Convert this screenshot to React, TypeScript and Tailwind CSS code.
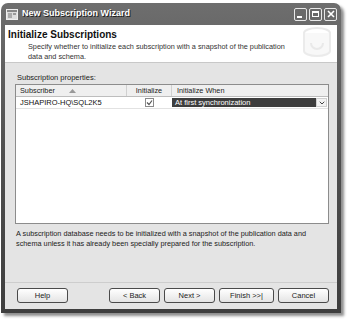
import { ChevronDown } from 'lucide-react'

const font = { fontFamily: '"Liberation Sans", Arial, sans-serif' }

function TitleButton({ kind }: { kind: 'min' | 'max' | 'close' }) {
  return (
    <div className="w-[13px] h-[13px] rounded-[2px] border border-[#e8e8e8] bg-[#6a6a6a] flex items-center justify-center">
      {kind === 'min' && <div className="w-[5px] h-[2px] bg-white mt-[6px] -ml-[2px]" />}
      {kind === 'max' && <div className="w-[7px] h-[6px] border border-white border-t-2" />}
      {kind === 'close' && (
        <svg width="8" height="8" viewBox="0 0 8 8">
          <path d="M1 1 L7 7 M7 1 L1 7" stroke="white" strokeWidth="1.6" />
        </svg>
      )}
    </div>
  )
}

function WizButton({ label, wide }: { label: string; wide?: boolean }) {
  return (
    <button
      className={
        (wide ? 'w-[55px] ' : 'w-[51px] ') +
        'h-[15px] rounded-[3px] border border-[#4a4a4a] bg-gradient-to-b from-white to-[#e4e4e4] text-[7.5px] text-[#222] flex items-center justify-center leading-none'
      }
    >
      {label}
    </button>
  )
}

export default function App() {
  return (
    <div className="w-[350px] h-[320px] bg-white pt-[3px] pl-[1px]" style={font}>
      {/* Window */}
      <div className="w-[340px] h-[310px] rounded-t-[7px] bg-gradient-to-b from-[#6e6e6e] via-[#4f4f4f] to-[#3e3e3e] px-[4px] pb-[4px] flex flex-col shadow-[3px_3px_3px_rgba(0,0,0,0.45)]">
        {/* Title bar */}
        <div className="h-[22px] flex items-center pl-[1px]">
          <svg width="12" height="11" viewBox="0 0 12 11" className="mr-[4px]">
            <rect x="0.5" y="0.5" width="11" height="10" fill="#ddd" stroke="#eee" />
            <rect x="1" y="1" width="10" height="2" fill="#888" />
            <rect x="2" y="4" width="4" height="5" fill="#aaa" />
            <rect x="7" y="4" width="3" height="2" fill="#999" />
          </svg>
          <span className="text-[9px] font-bold text-white [text-shadow:1px_1px_0_#222]">
            New Subscription Wizard
          </span>
          <div className="ml-auto flex gap-[2px] items-center">
            <TitleButton kind="min" />
            <TitleButton kind="max" />
            <TitleButton kind="close" />
          </div>
        </div>

        {/* Client area */}
        <div className="flex-1 flex flex-col bg-[#e4e4e4]">
          {/* Header */}
          <div className="h-[38px] bg-white border-b border-[#c8c8c8] relative pl-[3px] pt-[4px]">
            <div className="text-[10px] font-bold text-[#111] leading-[12px]">Initialize Subscriptions</div>
            <div className="pl-[20px] text-[7.3px] text-[#333] leading-[10px] mt-[1px]">
              Specify whether to initialize each subscription with a snapshot of the publication
              <br />
              data and schema.
            </div>
            <svg width="36" height="36" viewBox="0 0 36 36" className="absolute right-[2px] top-[0px] opacity-25">
              <ellipse cx="18" cy="8" rx="13" ry="5" fill="none" stroke="#aaa" strokeWidth="2" />
              <path d="M5 8 V26 A13 5 0 0 0 31 26 V8" fill="#e4e4e4" stroke="#b4b4b4" strokeWidth="2" />
              <path d="M12 18 A6 6 0 0 0 24 18" fill="none" stroke="#aaa" strokeWidth="2" />
            </svg>
          </div>

          {/* Body */}
          <div className="flex-1 flex flex-col pl-[10px] pr-[8px]">
            <div className="text-[7.5px] text-[#222] mt-[9px] h-[12px] leading-[12px] pl-[2px]">Subscription properties:</div>
            <div className="h-[140px] border border-[#8c8c8c] bg-white flex flex-col">
              {/* Header row */}
              <div className="h-[12px] flex bg-[#efefef] border-b border-[#bdbdbd] text-[7.3px] text-[#222] leading-[11px]">
                <div className="w-[111px] pl-[4px] flex items-center border-r border-[#d0d0d0]">
                  Subscriber
                  <svg width="7" height="4" viewBox="0 0 7 4" className="ml-[14px]">
                    <path d="M0 4 L3.5 0 L7 4 Z" fill="#999" />
                  </svg>
                </div>
                <div className="w-[45px] flex items-center justify-center border-r border-[#d0d0d0]">Initialize</div>
                <div className="flex-1 pl-[5px] flex items-center">Initialize When</div>
              </div>
              {/* Data row */}
              <div className="h-[12px] flex text-[7.5px] text-[#111] leading-[11px] border-b border-[#e2e2e2]">
                <div className="w-[111px] pl-[4px] flex items-center">JSHAPIRO-HQ\SQL2K5</div>
                <div className="w-[45px] flex items-center justify-center">
                  <div className="w-[9px] h-[9px] border border-[#8a8a8a] bg-white flex items-center justify-center">
                    <svg width="7" height="7" viewBox="0 0 7 7">
                      <path d="M1 3.5 L3 5.5 L6 1.5" fill="none" stroke="#555" strokeWidth="1.2" />
                    </svg>
                  </div>
                </div>
                <div className="flex-1 flex items-stretch py-[1px] pr-[1px]">
                  <div className="flex-1 bg-[#3d3d3d] text-white pl-[3px] flex items-center">At first synchronization</div>
                  <div className="w-[11px] bg-[#f2f2f2] border border-[#cfcfcf] flex items-center justify-center">
                    <ChevronDown size={8} strokeWidth={3} className="text-[#444]" />
                  </div>
                </div>
              </div>
            </div>
            <div className="mt-[5px] text-[7.3px] text-[#222] leading-[10px] pl-[1px]">
              A subscription database needs to be initialized with a snapshot of the publication data and
              <br />
              schema unless it has already been specially prepared for the subscription.
            </div>
          </div>

          {/* Footer */}
          <div className="border-t border-[#cdcdcd] h-[27px] flex items-start pt-[5px] pl-[12px] pr-[8px]">
            <WizButton label="Help" />
            <div className="ml-auto flex gap-[4px]">
              <WizButton label="< Back" />
              <WizButton label="Next >" />
              <WizButton label="Finish >>|" wide />
              <WizButton label="Cancel" />
            </div>
          </div>
        </div>
      </div>
    </div>
  )
}
